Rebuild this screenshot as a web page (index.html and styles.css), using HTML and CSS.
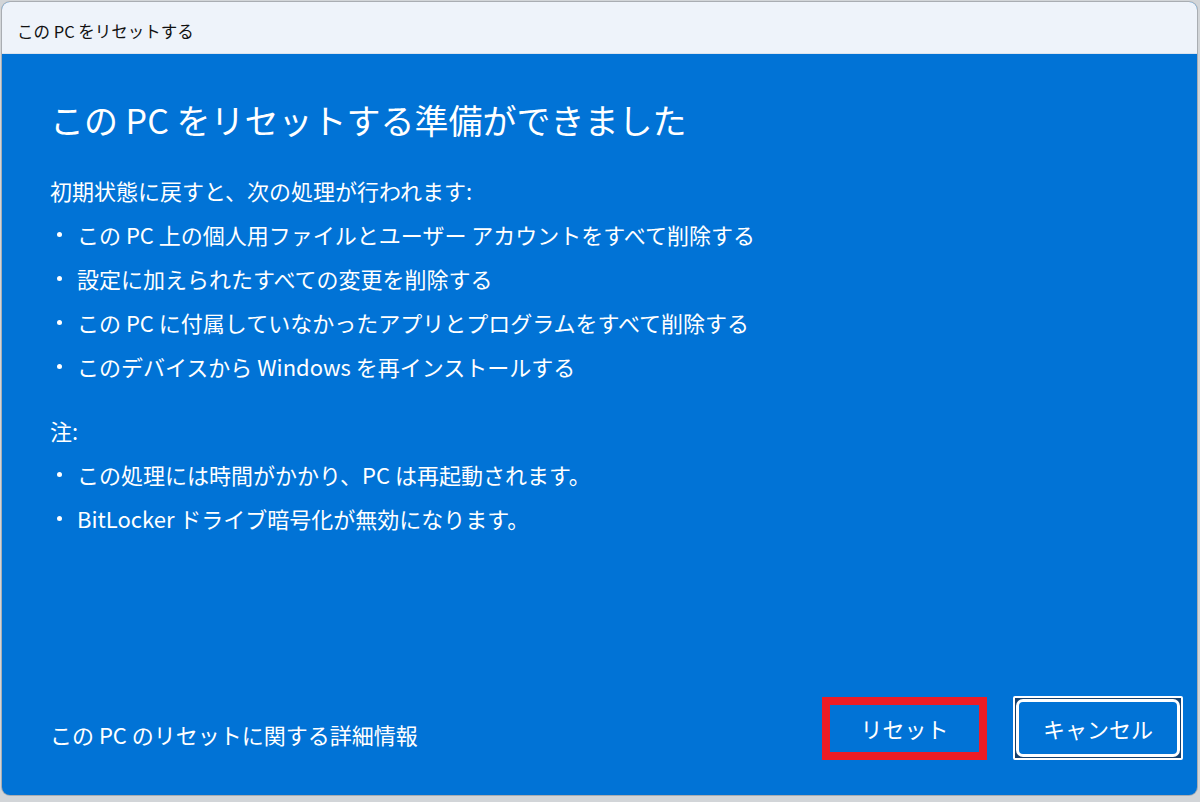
FILE: index.html
```html
<!DOCTYPE html>
<html lang="ja">
<head>
<meta charset="utf-8">
<title>この PC をリセットする</title>
<link rel="stylesheet" href="styles.css">
</head>
<body>
<div class="window">
  <div class="titlebar">この PC をリセットする</div>
  <div class="content">
    <h1 class="heading">この PC をリセットする準備ができました</h1>
    <p class="line">初期状態に戻すと、次の処理が行われます:</p>
    <ul class="list">
      <li>この PC 上の個人用ファイルとユーザー アカウントをすべて削除する</li>
      <li>設定に加えられたすべての変更を削除する</li>
      <li>この PC に付属していなかったアプリとプログラムをすべて削除する</li>
      <li>このデバイスから Windows を再インストールする</li>
    </ul>
    <p class="line note">注:</p>
    <ul class="list">
      <li>この処理には時間がかかり、PC は再起動されます。</li>
      <li>BitLocker ドライブ暗号化が無効になります。</li>
    </ul>
    <div class="footer">
      <span class="link">この PC のリセットに関する詳細情報</span>
      <div class="buttons">
        <div class="btn-reset">リセット</div>
        <div class="btn-cancel-ring"><div class="btn-cancel">キャンセル</div></div>
      </div>
    </div>
  </div>
</div>
</body>
</html>
```

FILE: styles.css
```css
html, body {
  margin: 0;
  padding: 0;
}
body {
  width: 1200px;
  height: 802px;
  background: #d2d5d8;
  font-family: "Noto Sans CJK JP", "Noto Sans", sans-serif;
  overflow: hidden;
}
.window {
  margin: 2px 3px 0 2px;
  height: 793px;
  border-radius: 8px;
  overflow: hidden;
  display: flex;
  flex-direction: column;
  box-shadow: 0 0 0 1px #a9adb2;
  background: #0173d6;
}
.titlebar {
  height: 52px;
  flex: none;
  background: #eef3fa;
  color: #111;
  font-size: 16.5px;
  display: flex;
  align-items: center;
  padding: 6px 0 0 15px;
  border-bottom: 1px solid #dbe3ee;
  box-sizing: border-box;
}
.content {
  flex: 1;
  display: flex;
  flex-direction: column;
  padding: 44px 14px 35px 48px;
  color: #fff;
}
.heading {
  margin: 0 0 27px 0;
  font-weight: normal;
  font-size: 34px;
  line-height: 43px;
}
.line {
  margin: 0;
  font-size: 22px;
  line-height: 44px;
}
.note {
  margin-top: 20px;
}
.list {
  margin: 0;
  padding: 0;
  list-style: none;
}
.list li {
  position: relative;
  padding-left: 27px;
  font-size: 22px;
  line-height: 44px;
}
.list li::before {
  content: "";
  position: absolute;
  left: 7px;
  top: 20px;
  width: 5px;
  height: 5px;
  border-radius: 50%;
  background: #fff;
}
.footer {
  margin-top: auto;
  display: flex;
  align-items: center;
  justify-content: space-between;
}
.link {
  font-size: 22px;
  padding-top: 12px;
}
.buttons {
  display: flex;
  gap: 26px;
  align-items: center;
}
.btn-reset {
  width: 165px;
  height: 63px;
  box-sizing: border-box;
  border: 8px solid #ee1c25;
  background: #0173d6;
  color: #fff;
  font-size: 22px;
  display: flex;
  align-items: center;
  justify-content: center;
}
.btn-cancel-ring {
  width: 170px;
  height: 64px;
  box-sizing: border-box;
  border: 2px solid #fff;
  border-radius: 2px;
  background: #14406f;
  padding: 1px;
}
.btn-cancel {
  height: 100%;
  box-sizing: border-box;
  border: 3px solid #fff;
  border-radius: 7px;
  background: #0173d6;
  color: #fff;
  font-size: 22px;
  display: flex;
  align-items: center;
  justify-content: center;
}
```
